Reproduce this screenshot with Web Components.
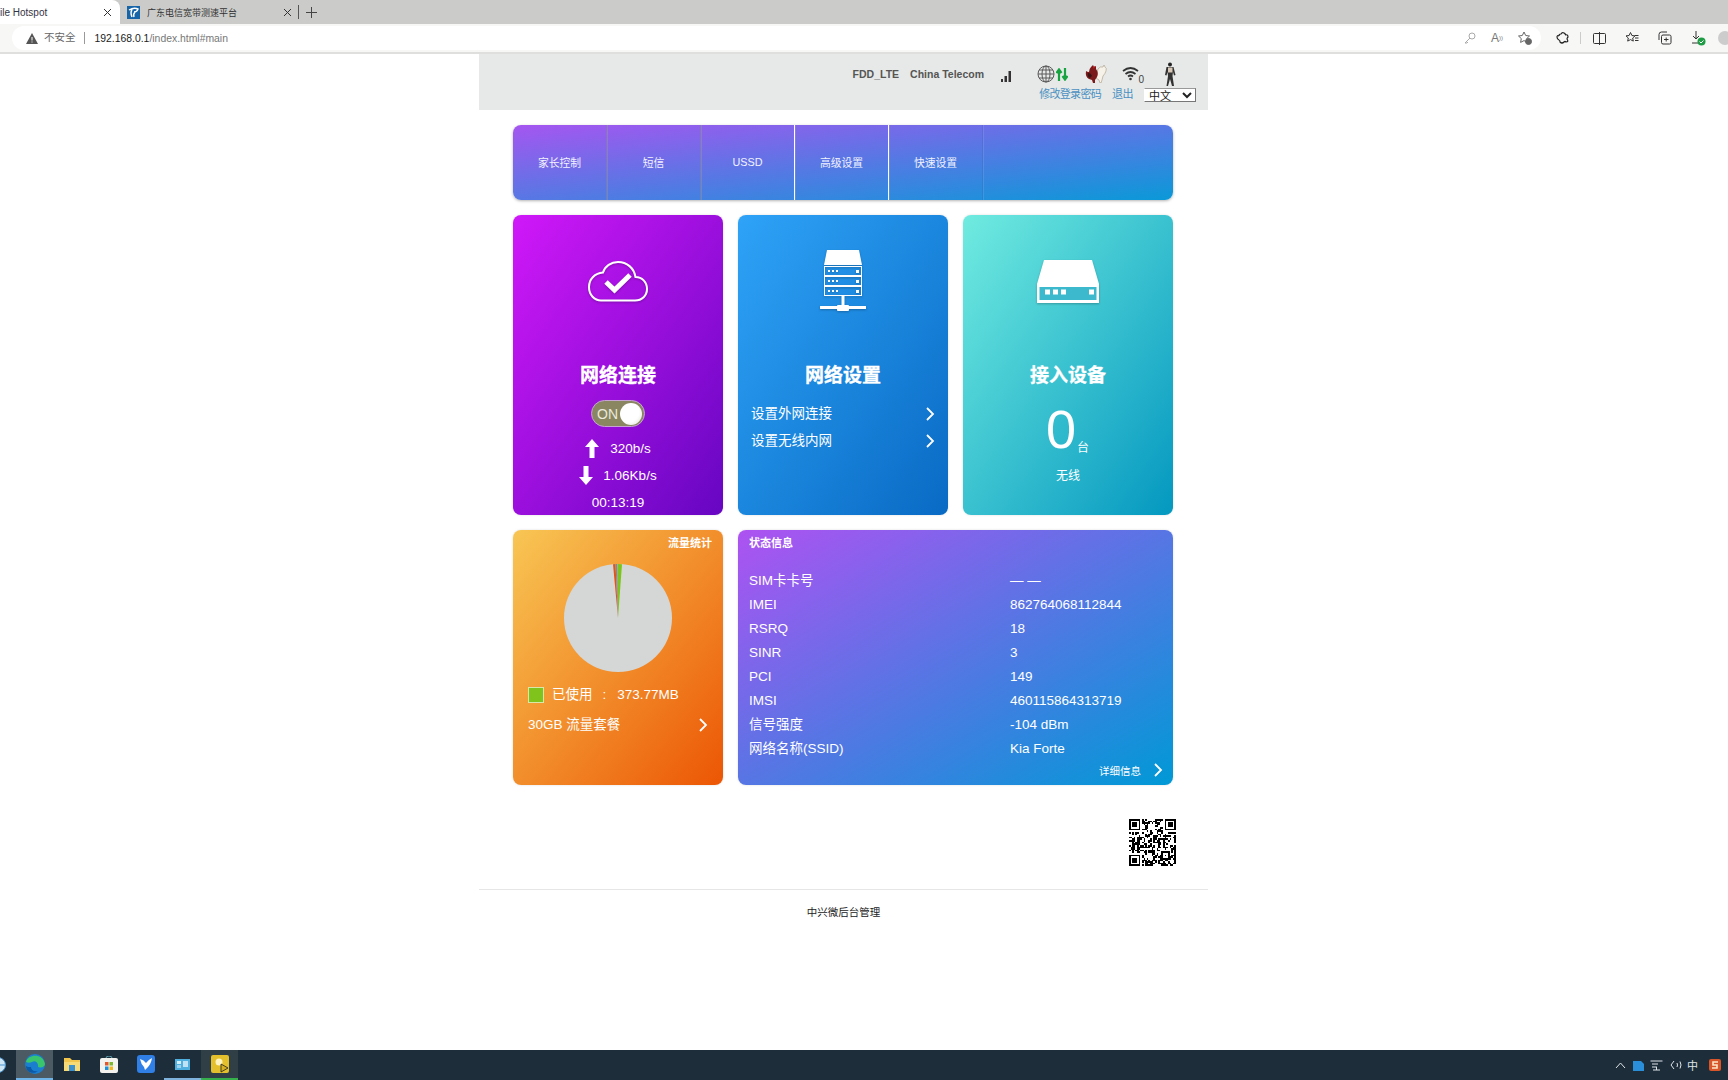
<!DOCTYPE html>
<html lang="zh"><head><meta charset="utf-8"><title>Mobile Hotspot</title>
<style>
html,body{margin:0;height:1080px;overflow:hidden;background:#fff;font-family:"Liberation Sans","Noto Sans CJK SC",sans-serif}
body{display:flex;flex-direction:column}
rh-page{flex:1;min-height:0}
</style></head><body>
<rh-browser></rh-browser>
<rh-page>
  <rh-header></rh-header>
  <rh-nav></rh-nav>
  <rh-dashboard></rh-dashboard>
  <rh-qr></rh-qr>
  <rh-footer>中兴微后台管理</rh-footer>
</rh-page>
<rh-taskbar></rh-taskbar>
<script>
function def(name, html, init){
  customElements.define(name, class extends HTMLElement{
    constructor(){super();this.attachShadow({mode:'open'}).innerHTML=html;if(init)init(this)}
  });
}
const chevron=`<svg width="10" height="14" viewBox="0 0 10 14"><path d="M2 1l6 6-6 6" fill="none" stroke="#fff" stroke-width="1.8"/></svg>`;

def('rh-browser',`<style>
:host{display:block;flex:none;font-size:10px;color:#333}
.tabs{height:24px;background:#cbccca;display:flex;align-items:center}
.tab{width:120px;height:24px;background:#fff;border-radius:0 8px 0 0;display:flex;align-items:center;overflow:hidden;flex:none}
.tab span{flex:1;white-space:nowrap;color:#334}
.tab svg{margin-right:8px}
.t2{width:178px;display:flex;align-items:center;flex:none;height:24px}
.t2 svg:first-child{margin-left:7px}
.t2 span{margin-left:7px;font-size:9px;width:89px;white-space:nowrap;color:#333}
.t2 svg:last-child{margin-left:47px}
.sep{width:1px;height:14px;background:#555}
.plus{margin-left:7px}
.bar{height:28px;background:#f7f7f6;border-bottom:2px solid #dfdfde;display:flex;align-items:center;padding-left:12px}
.pill{width:1529px;height:24px;background:#fff;border-radius:12px;display:flex;align-items:center;flex:none}
.pill .w{margin-left:14px}
.pill .g{color:#666;margin-left:6px;font-size:10.5px;line-height:12px;margin-top:-2px}
.pill i{width:1px;height:12px;background:#999;margin:0 10px 0 8px}
.pill b{font-weight:400;color:#222}.pill em{font-style:normal;color:#777}
.url{font-size:10.400px}
.sp{flex:1}
.ic{display:flex;align-items:center;justify-content:center;width:20px;height:20px}
.pill .ic:nth-last-child(3){margin-right:7px}.pill .ic:nth-last-child(2){margin-right:8px}.pill .ic:last-child{margin-right:6px}
.r{display:flex;align-items:center}
</style>
<div class="tabs">
 <div class="tab"><span>ile Hotspot</span><svg width="9" height="9" viewBox="0 0 9 9"><path d="M1 1l7 7M8 1L1 8" stroke="#333" stroke-width="1"/></svg></div>
 <div class="t2"><svg width="13" height="13" viewBox="0 0 13 13"><rect width="13" height="13" fill="#1565a8"/><path d="M2 4q5-3 9-1-1 3-4 3M5 3q-2 4 0 8M8 6q-2 2-1 5" fill="none" stroke="#fff" stroke-width="1.4"/></svg><span>广东电信宽带测速平台</span><svg width="9" height="9" viewBox="0 0 9 9"><path d="M1 1l7 7M8 1L1 8" stroke="#333" stroke-width="1"/></svg></div>
 <div class="sep"></div>
 <svg class="plus" width="11" height="11" viewBox="0 0 11 11"><path d="M5.500 0v11M0 5.500h11" stroke="#444" stroke-width="1"/></svg>
</div>
<div class="bar">
 <div class="pill">
  <svg class="w" width="12" height="11" viewBox="0 0 12 11"><path d="M6 0l6 11H0z" fill="#555"/><path d="M6 4v3.500M6 8.500v1" stroke="#fff" stroke-width="1"/></svg>
  <span class="g">不安全</span><i></i><span class="url"><b>192.168.0.1</b><em>/index.html#main</em></span>
  <div class="sp"></div>
  <div class="ic"><svg width="12" height="12" viewBox="0 0 12 12" fill="none" stroke="#aaa"><circle cx="8" cy="4" r="3"/><path d="M6 6L1 11h2l1-1"/></svg></div>
  <div class="ic" style="color:#777;font-size:12px">A<sup style="font-size:6px">))</sup></div>
  <div class="ic"><svg width="14" height="14" viewBox="0 0 14 14" fill="none" stroke="#666"><path d="M6 1l1.700 3.500 3.800.5-2.800 2.600.7 3.800L6 9.600l-3.400 1.800.7-3.800L.5 5l3.800-.5z"/><circle cx="10.500" cy="10.500" r="3" fill="#666"/></svg></div>
 </div>
 <div class="r" style="margin-left:12px">
  <div class="ic"><svg width="14" height="14" viewBox="0 0 14 14" fill="none" stroke="#222" stroke-width="1.200"><path d="M3 5q0-2 2-2 1-2 3-1t1 2q3-1 3 2-1 1-1 2 2 3-1 3-1-1-2 0-2 2-4 0 0-2-1-2-2-1-2-3 0-2 2-1"/></svg></div>
  <div style="width:1px;height:12px;background:#ccc;margin:0 7px"></div>
  <div class="ic" style="margin-left:1px"><svg width="13" height="13" viewBox="0 0 13 13" fill="none" stroke="#333"><rect x=".5" y="1.500" width="12" height="10" rx="1"/><path d="M6.500 0v13"/></svg></div>
  <div class="ic" style="margin-left:13px"><svg width="14" height="14" viewBox="0 0 14 14" fill="none" stroke="#333"><path d="M5.500 1.500l1.400 3 3.100.4-2.300 2.100.6 3.100-2.800-1.500-2.800 1.500.6-3.100L1 4.900l3.100-.4zM10 7h3.500M10 9.500h3.500M10 4.500h3.500"/></svg></div>
  <div class="ic" style="margin-left:13px"><svg width="14" height="14" viewBox="0 0 14 14" fill="none" stroke="#333"><rect x="3.500" y="4" width="9.500" height="9" rx="1.500"/><path d="M1 9V3.500Q1 1 3.500 1H9M8.200 6.500v4M6 8.500h4.500"/></svg></div>
  <div class="ic" style="margin-left:13px"><svg width="16" height="16" viewBox="0 0 16 16"><path d="M6 1v8M3 6l3 3 3-3M2 13h8" fill="none" stroke="#333"/><circle cx="11.500" cy="11.500" r="4" fill="#1f9d45"/><path d="M9.500 11.500l1.500 1.500 2.500-2.500" fill="none" stroke="#fff"/></svg></div>
  <div style="width:14px;height:14px;border-radius:50%;background:#ccc;margin-left:10px"></div>
 </div>
</div>`);

def('rh-page',`<style>:host{display:block;width:729px;margin-left:479px}</style><slot></slot>`);

def('rh-header',`<style>
:host{display:block;height:56px;background:#e6e9e7;box-sizing:border-box;padding:8px 12px 0 0;color:#555}
.top,.bot{display:flex;align-items:center;justify-content:flex-end}
.top{height:24px}
.top b{font-size:10.500px;font-weight:700;color:#555;white-space:nowrap}
.bot{height:16px;font-size:11px;color:#4a90c2;line-height:16px}
.bot span{white-space:nowrap}
select{width:52px;height:14px;font:11px "Liberation Sans","Noto Sans CJK SC",sans-serif;border:1px solid #777;border-left-color:#fff;border-top-color:#999;background:#fff;color:#222;padding:0;margin:1px 0 0 11px;box-sizing:border-box;border-radius:0}
.wifi{position:relative;display:flex}
</style>
<div class="top">
 <b>FDD_LTE</b><b style="margin-left:11px">China Telecom</b>
 <svg style="margin-left:16px;margin-top:2px" width="12" height="13" viewBox="0 0 12 13" fill="#333"><rect x="1" y="10" width="2" height="3"/><rect x="4.500" y="7" width="2.500" height="6"/><rect x="8.500" y="2" width="2.500" height="11"/></svg>
 <svg style="margin-left:25px" width="18" height="18" viewBox="0 0 18 18" fill="none" stroke="#5a5a5a" stroke-width="1"><circle cx="9" cy="9" r="8"/><ellipse cx="9" cy="9" rx="4" ry="8"/><path d="M9 1v16M1 9h16M2 5h14M2 13h14"/></svg>
 <svg style="margin-left:1px" width="12" height="13" viewBox="0 0 12 13" fill="none" stroke="#16a340" stroke-width="2.200"><path d="M3 13V2M.5 5L3 1.500 5.500 5M9 0v11M6.500 8L9 11.500 11.500 8"/></svg>
 <svg style="margin-left:17px" width="22" height="18" viewBox="0 0 22 18"><path d="M13 4q2-3 5-2l1-2 1 2q2 1 1 4-1 3-3 5l-1 4-1 3h-1l-1-3-3-2z" fill="#f6f2ea" stroke="#a89880" stroke-width=".6"/><path d="M6 2l2-2 1 2 2-1v3q3 4 1 8l-2 3v3H8l-1-3-3-1Q0 12 1 6q1 1 3 1 0-3 2-5z" fill="#7a1a1a"/><path d="M3 8q3 0 4 3l-2 2q-3-1-2-5z" fill="#3a1210"/><path d="M7 0l1 2 2-1-1 3z" fill="#d81818"/></svg>
 <div class="wifi" style="margin-left:15px;width:21px;height:16px"><svg width="17" height="15" viewBox="0 0 17 15" fill="none" stroke="#333" stroke-width="1.700"><path d="M1 5q7.500-6 15 0M3.500 8q5-4 10 0M6 10.500q2.500-2 5 0"/><circle cx="8.500" cy="13" r="1.300" fill="#333" stroke="none"/></svg><span style="font-size:10px;position:absolute;right:-1px;bottom:-3px;color:#444">0</span></div>
 <svg style="margin-left:20px;margin-right:19px" width="14" height="24" viewBox="0 0 14 24"><circle cx="7" cy="2.500" r="2" fill="#222"/><path d="M3.500 5h7l2 8-1.500.5-1-3.500-.5 4 1.500 10H9l-2-7-2 7H3.500L5 14l-.5-4-1 3.500L2 13z" fill="#333"/><rect x="5" y="5.500" width="4.500" height="5" fill="#d8c8b8"/></svg>
</div>
<div class="bot"><span style="letter-spacing:-.7px">修改登录密码</span><span style="margin-left:11px;letter-spacing:-.5px">退出</span><select><option>中文</option></select></div>`);

def('rh-nav',`<style>
:host{display:block;margin:15px 35px 0 34px;height:75px;border-radius:8px;background:linear-gradient(to bottom right,#a556f0,#0a99d8);box-shadow:0 1px 3px rgba(0,0,0,.3);color:#f2f2ff;font-size:10.800px}
.w{display:flex;height:100%}
.i{width:94px;display:flex;align-items:center;justify-content:center;border-right:1px solid rgba(130,130,150,.75);box-sizing:border-box;padding-bottom:2px;box-shadow:1px 0 0 rgba(255,255,255,.1)}
.i.s{border-right-color:#fff}
.i:last-child{border-right-color:rgba(40,90,170,.2)}
</style><div class="w"><div class="i">家长控制</div><div class="i">短信</div><div class="i s">USSD</div><div class="i s">高级设置</div><div class="i">快速设置</div></div>`);

def('rh-card',`<style>
:host{display:block;border-radius:8px;background:linear-gradient(to bottom right,var(--c1),var(--c2));color:#fff;overflow:hidden;box-shadow:0 0 2px rgba(120,120,120,.3);box-sizing:border-box;font-size:13.500px}
</style><slot></slot>`);

def('rh-dashboard',`<style>
:host{display:grid;grid-template-columns:210px 210px 210px;grid-template-rows:300px 255px;gap:15px;margin:15px 35px 0 34px;--s:drop-shadow(0 1px 1px rgba(0,0,0,.25))}
rh-info{grid-column:span 2}
.ic{height:132px;margin-bottom:13px;display:flex;align-items:center;justify-content:center}
.ic svg{filter:var(--s)}
h2{margin:0;height:30px;line-height:32px;font-size:19px;font-weight:700;text-align:center;-webkit-text-stroke:.3px #fff}
.tg{margin:10px auto 0;width:54px;height:27px;box-sizing:border-box;border:1px solid #c6a2d6;background:#8a8661;border-radius:14px;display:flex;align-items:center;justify-content:space-between;padding:0 2px 0 5px;font-size:14px;color:#e9e9dc}
.tg i{width:22px;height:22px;border-radius:50%;background:radial-gradient(circle at 40% 40%,#fff 55%,#d8d8d0)}
.rw{height:27px;display:flex;align-items:center;justify-content:center}
.rw svg{flex:none}
.up{margin-top:7.500px}
.lk{height:27px;line-height:27px;display:flex;align-items:center;justify-content:space-between;padding:0 13px 0 13px}
.num{display:flex;justify-content:center;align-items:flex-end;height:60px;margin-top:9px;padding-right:1px}
.num b{font-weight:400;font-size:54px;line-height:60px}
.num span{font-size:12px;line-height:14px;margin:0 0 4px 1px}
.wx{text-align:center;font-size:12px;height:16px;line-height:16px;margin-top:9px}
</style>
<rh-card style="--c1:#d018f8;--c2:#6606c2">
 <div class="ic"><svg width="60" height="41" viewBox="0 0 60 41" fill="none" stroke="#fff"><path stroke-width="2" d="M13 39.500h34c7 0 12-5 12-11.500 0-7-5-12-11.500-12C46 7 39 1 30 1c-7 0-13 4-15 10.500C7 12 1 18 1 26c0 8 5.500 13.500 12 13.500z"/><path stroke-width="5" d="M18 21l8.500 8L42 14"/></svg></div>
 <h2>网络连接</h2>
 <div class="tg">ON<i></i></div>
 <div class="rw up"><svg style="margin-right:11px" width="14" height="19" viewBox="0 0 14 19" fill="#fff"><path d="M7 0l7 8H9.500v11h-5V8H0z"/></svg><span>320b/s</span></div>
 <div class="rw"><svg style="margin-right:10px" width="14" height="19" viewBox="0 0 14 19" fill="#fff"><path d="M7 19l7-8H9.500V0h-5v11H0z"/></svg><span>1.06Kb/s</span></div>
 <div class="rw">00:13:19</div>
</rh-card>
<rh-card style="--c1:#2ea3f7;--c2:#096ac4">
 <div class="ic"><svg width="46" height="62" viewBox="0 0 46 62"><path d="M7 0h32l3 15H4z" fill="#fff"/>
  <g fill="none" stroke="#fff" stroke-width="1"><rect x="4.500" y="16.500" width="37" height="9"/><rect x="4.500" y="26.500" width="37" height="9"/><rect x="4.500" y="36.500" width="37" height="9"/></g>
  <g fill="#fff"><rect x="8" y="20" width="2" height="2"/><rect x="12" y="20" width="2" height="2"/><rect x="16" y="20" width="2" height="2"/><rect x="36" y="20" width="3" height="3"/><rect x="8" y="30" width="2" height="2"/><rect x="12" y="30" width="2" height="2"/><rect x="16" y="30" width="2" height="2"/><rect x="36" y="30" width="3" height="3"/><rect x="8" y="40" width="2" height="2"/><rect x="12" y="40" width="2" height="2"/><rect x="16" y="40" width="2" height="2"/><rect x="36" y="40" width="3" height="3"/><rect x="21.500" y="46" width="3" height="11"/><rect x="0" y="56" width="46" height="3"/><rect x="17" y="55" width="12" height="6" rx="1"/></g></svg></div>
 <h2>网络设置</h2>
 <div class="lk" style="margin-top:10px"><span>设置外网连接</span>${chevron}</div>
 <div class="lk"><span>设置无线内网</span>${chevron}</div>
</rh-card>
<rh-card style="--c1:#70ebe0;--c2:#0498c0">
 <div class="ic"><svg width="62" height="43" viewBox="0 0 62 43"><path d="M7 0h48l7 24v19H0V24z" fill="#fff"/><rect x="2.500" y="27" width="57" height="13" fill="#3cb9cd"/><g fill="#fff"><rect x="8" y="29.500" width="5" height="5"/><rect x="16" y="29.500" width="5" height="5"/><rect x="24" y="29.500" width="5" height="5"/><rect x="52" y="29.500" width="5" height="5"/></g></svg></div>
 <h2>接入设备</h2>
 <div class="num"><b>0</b><span>台</span></div>
 <div class="wx">无线</div>
</rh-card>
<rh-traffic></rh-traffic>
<rh-info></rh-info>`);

def('rh-traffic',`<style>
:host{display:block}
rh-card{height:100%}
.t{height:26px;line-height:26px;text-align:right;padding-right:11px;font-size:11px;font-weight:700}
svg.p{display:block;margin:8px auto 0}
.l{display:flex;align-items:center;height:24px;line-height:24px;margin-top:11px;padding-left:15px}
.l i{width:16px;height:16px;background:#7fc31c;border:.5px solid #d9e8a8;box-sizing:border-box;margin-right:8px}
.m{display:flex;align-items:center;justify-content:space-between;height:28px;line-height:28px;margin-top:4px;padding:0 15px}
.c{margin:0 11px 0 10px}
</style><rh-card style="--c1:#f8c654;--c2:#ec5604">
<div class="t">流量统计</div>
<svg class="p" width="108" height="108" viewBox="0 0 108 108"><circle cx="54" cy="54" r="54" fill="#d5d7d6"/><path d="M54 54L58 .2 53.800 0z" fill="#7cc51c"/><path d="M54 54L51.500 .1 49 .2z" fill="#e0541a"/><path d="M54 54L53.500 0 51.500 .1z" fill="#8a8a7a"/></svg>
<div class="l"><i></i><span>已使用</span><span class="c">:</span><span>373.77MB</span></div>
<div class="m"><span>30GB 流量套餐</span>${chevron}</div>
</rh-card>`);

def('rh-info',`<style>
:host{display:block}
rh-card{height:100%}
.t{height:26px;line-height:26px;padding-left:11px;font-size:11px;font-weight:700}
.g{display:grid;grid-template-columns:261px 1fr;grid-auto-rows:24px;line-height:24px;margin-top:13px;padding-left:11px;align-items:center}
.d{display:flex;justify-content:flex-end;align-items:center;height:20px;margin-top:-1px;font-size:10.500px;padding-right:10px;gap:12px}
</style><rh-card style="--c1:#ae52f2;--c2:#0099d6">
<div class="t">状态信息</div>
<div class="g">
<span>SIM卡卡号</span><span>— —</span>
<span>IMEI</span><span>862764068112844</span>
<span>RSRQ</span><span>18</span>
<span>SINR</span><span>3</span>
<span>PCI</span><span>149</span>
<span>IMSI</span><span>460115864313719</span>
<span>信号强度</span><span>-104 dBm</span>
<span>网络名称(SSID)</span><span>Kia Forte</span>
</div>
<div class="d"><span>详细信息</span>${chevron}</div>
</rh-card>`);

def('rh-qr',`<style>:host{display:flex;justify-content:flex-end;margin:34px 32px 0 0}svg{display:block}</style><svg id="q" width="47" height="47" viewBox="0 0 29 29" shape-rendering="crispEdges"></svg>`,el=>{
  const n=29;let seed=73129,out='';
  const rnd=()=>{seed=(seed*1103515245+12345)&0x7fffffff;return (seed>>16)&1};
  const inF=(x,y,a,b)=>x>=a-1&&x<=a+7&&y>=b-1&&y<=b+7;
  for(let y=0;y<n;y++)for(let x=0;x<n;x++){
    if(inF(x,y,0,0)||inF(x,y,22,0)||inF(x,y,0,22))continue;
    if(x>=20&&x<=24&&y>=20&&y<=24)continue;
    if(rnd())out+=`<rect x="${x}" y="${y}" width="1" height="1"/>`;
  }
  const f=(a,b)=>`<path fill-rule="evenodd" d="M${a} ${b}h7v7h-7zM${a+1} ${b+1}v5h5v-5z"/><rect x="${a+2}" y="${b+2}" width="3" height="3"/>`;
  out+=f(0,0)+f(22,0)+f(0,22)+`<path fill-rule="evenodd" d="M20 20h5v5h-5zM21 21v3h3v-3z"/><rect x="22" y="22" width="1" height="1"/>`;
  el.shadowRoot.getElementById('q').innerHTML=out;
});

def('rh-footer',`<style>:host{display:block;margin-top:23px;border-top:1px solid #e6e6e6;height:44px;line-height:44px;text-align:center;font-size:10.500px;color:#222}</style><slot></slot>`);

def('rh-taskbar',`<style>
:host{display:flex;flex:none;height:30px;background:#1e2d3a;align-items:stretch;box-sizing:border-box}
.t{width:37px;display:flex;align-items:center;justify-content:center;box-sizing:border-box;border-bottom:2px solid transparent}
.a{background:#4b5a63;border-bottom-color:#6fb4e8}
.o{border-bottom-color:#7fb2dc}
.g{border-bottom-color:#35b04a;background:#2f3f45}
.sp{flex:1}
.tr{display:flex;align-items:center;color:#dfe5ea;padding-right:7px}
.start{width:16px;display:flex;align-items:center;overflow:hidden}
</style>
<div class="start"><svg style="margin-left:-10px" width="16" height="16" viewBox="0 0 16 16"><circle cx="8" cy="8" r="7.500" fill="#cfe6f5" stroke="#4a92cc"/><path d="M8 .5v15M.5 8h15" stroke="#4a92cc"/></svg></div>
<div class="t a"><svg width="20" height="20" viewBox="0 0 20 20"><circle cx="10" cy="10" r="10" fill="#1b7fd0"/><path d="M1 8C3 0 18-1 20 10c0 3-4 4-7 3 1-4-3-7-6-5-2 1-4 1-6 0z" fill="#38c56e"/><path d="M6 13c0 3 3 5 7 4-5 4-12 1-12-5 1 1 3 1 5 1z" fill="#0a5aa8"/></svg></div>
<div class="t"><svg width="16" height="14" viewBox="0 0 16 14"><path d="M0 1h6l2 2h8v11H0z" fill="#f2c64c"/><rect y="5" width="16" height="9" fill="#f7d976"/><rect x="5" y="8" width="6" height="6" fill="#3a8fd0"/></svg></div>
<div class="t"><svg width="18" height="17" viewBox="0 0 18 17"><rect y="2" width="18" height="15" rx="2" fill="#f3f2ee"/><path d="M6 2q0-2 3-2t3 2" fill="none" stroke="#6ab" /><rect x="5" y="6" width="3.500" height="3.500" fill="#e4572e"/><rect x="9.500" y="6" width="3.500" height="3.500" fill="#7cb82f"/><rect x="5" y="10.500" width="3.500" height="3.500" fill="#1f8fe0"/><rect x="9.500" y="10.500" width="3.500" height="3.500" fill="#f5b81c"/></svg></div>
<div class="t"><svg width="18" height="18" viewBox="0 0 18 18"><rect width="18" height="18" rx="3" fill="#2f7fe6"/><path d="M3 4q4 1 6 4 2-3 6-5-1 6-4 9l-3 3-1-3q-3-3-4-8z" fill="#fff"/></svg></div>
<div class="t o"><svg width="15" height="11" viewBox="0 0 15 11"><rect width="15" height="11" fill="#4fb0e0"/><rect x="2" y="2" width="4" height="3" fill="#d6eefa"/><rect x="8" y="2" width="5" height="6" fill="#bfe3f5"/><rect x="2" y="6" width="4" height="3" fill="#9fd2ee"/></svg></div>
<div class="t g"><svg width="18" height="18" viewBox="0 0 18 18"><rect width="18" height="18" rx="2" fill="#e3c02c"/><circle cx="8" cy="7" r="3.500" fill="#fff3c0"/><path d="M10 9l7 4-7 4z" fill="#d6b020" stroke="#222" stroke-width=".8"/></svg></div>
<div class="sp"></div>
<div class="tr">
 <svg width="11" height="7" viewBox="0 0 11 7"><path d="M1 6l4.500-5L10 6" fill="none" stroke="#dfe5ea"/></svg>
 <svg style="margin-left:7px" width="11" height="11" viewBox="0 0 11 11"><path d="M0 1h8l3 3v7H0z" fill="#2a8fd8"/></svg>
 <svg style="margin-left:6px" width="13" height="11" viewBox="0 0 13 11" fill="none" stroke="#dfe5ea"><path d="M.5 1h12M2 4h6M2 7h5M3 10h7M6.500 7v3"/></svg>
 <svg style="margin-left:7px" width="12" height="10" viewBox="0 0 12 10" fill="none" stroke="#dfe5ea"><path d="M4 1L1 5l3 4M7 3q1 2 0 4M10 1.500q2 3.500 0 7"/></svg>
 <span style="font-size:11px;margin-left:5px">中</span>
 <svg style="margin-left:11px" width="12" height="12" viewBox="0 0 12 12"><rect width="12" height="12" rx="2" fill="#d8562a"/><path d="M9 3H4v3h4v3H3" fill="none" stroke="#fbe6c8" stroke-width="1.600"/></svg>
</div>`);
</script>
</body></html>
